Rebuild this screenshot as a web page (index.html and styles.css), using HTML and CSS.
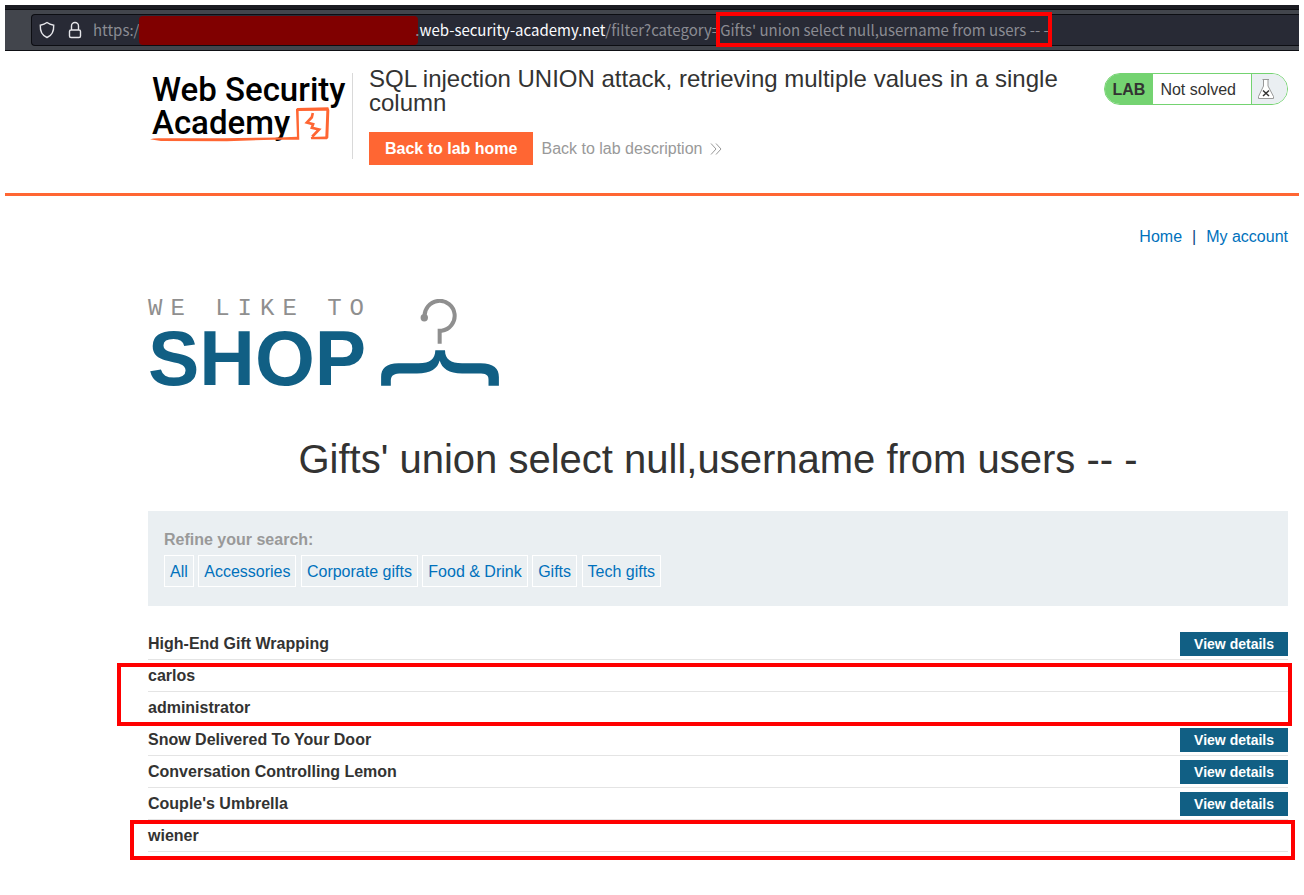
FILE: index.html
```html
<!DOCTYPE html>
<html lang="en">
<head>
<meta charset="utf-8">
<title>SQL injection UNION attack, retrieving multiple values in a single column</title>
<link rel="stylesheet" href="styles.css">
</head>
<body>
<div class="browser-bar">
  <div class="url-field">
    <svg class="url-icon" viewBox="0 0 16 18" width="16" height="18" aria-hidden="true"><path d="M8 1.5C6 3 3.500 3.800 1.300 4.200C1 10 3.300 14.500 8 16.500C12.700 14.500 15 10 14.700 4.200C12.500 3.800 10 3 8 1.500Z"/></svg>
    <svg class="url-icon" viewBox="0 0 16 18" width="16" height="18" aria-hidden="true"><path d="M4.500 9V5a3.500 3.500 0 0 1 7 0v4M2.500 10.500a1.500 1.500 0 0 1 1.500-1.500h8a1.500 1.500 0 0 1 1.500 1.500v4.500a1.500 1.500 0 0 1-1.500 1.500H4A1.500 1.500 0 0 1 2.500 15Z"/></svg>
    <div class="url-text"><span>https://</span><span class="redacted"></span><span>.</span><span class="domain">web-security-academy.net</span><span>/filter?category=</span><span class="payload">Gifts' union select null,username from users -- -</span></div>
  </div>
</div>

<header class="lab-header">
  <a class="academy-logo" href="#" aria-label="Web Security Academy">
    <span class="logo-line">Web Security</span>
    <span class="logo-line">Academy</span>
    <svg class="logo-mark" viewBox="27 140 545 106" width="182" height="35" aria-hidden="true"><path class="brush" d="M27 238Q38 234 60 235L250 235L420 232L472 230L469 147L473 143L567 141L570 150L567 233L563 238L515 238L514 231L558 229L561 151L477 152L479 239L400 239L260 244L60 243Z"/><path class="bolt" d="M520 158L517 171L502 187L521 192L517 203L539 208L518 230"/></svg>
  </a>
  <div class="lab-title">
    <h2>SQL injection UNION attack, retrieving multiple values in a single column</h2>
    <div class="lab-actions">
      <a class="lab-home" href="#">Back to lab home</a>
      <a class="lab-desc" href="#">Back to lab description <svg viewBox="0 0 12 12" width="12" height="12" aria-hidden="true"><path d="M1 0.500L6 6L1 11.500M6 0.500L11 6L6 11.500"/></svg></a>
    </div>
  </div>
  <div class="lab-status">
    <span class="status-tag">LAB</span>
    <span class="status-text">Not solved</span>
    <span class="status-flask"><svg viewBox="0 0 18 20" width="18" height="20" aria-hidden="true"><path class="flask" d="M5.500 0.500H12M6.500 0.500V7L1.500 17.500V19.500H16.500V17.500L11 7V0.500"/><path class="cross" d="M6 11.500L12 17M12 11.500L6 17"/></svg></span>
  </div>
</header>

<main class="shop">
  <nav class="top-links"><a href="#">Home</a><span>|</span><a href="#">My account</a></nav>

  <div class="shop-logo">
    <div class="shop-words">
      <span class="tagline">WE LIKE TO</span>
      <span class="shop-name">SHOP</span>
    </div>
    <svg viewBox="723 42 352 260" width="118" height="87" aria-hidden="true"><path class="hook" d="M853 96A45 45 0 1 1 904 137H898V176"/><circle class="knob" cx="852" cy="98" r="11"/><path class="hanger" d="M885 195H914C914 222 930 233 965 234H1020C1060 234 1075 250 1075 275V301H1044V283C1044 268 1035 265 1015 265H965C925 264 905 250 898 226C892 250 872 264 830 265H785C762 265 753 270 752 285V301H723V275C723 250 738 234 775 234H835C870 233 884 222 885 195Z"/></svg>
  </div>

  <h1>Gifts' union select null,username from users -- -</h1>

  <section class="filters">
    <span class="filters-label">Refine your search:</span>
    <div>
      <a class="chip" href="#">All</a>
      <a class="chip" href="#">Accessories</a>
      <a class="chip" href="#">Corporate gifts</a>
      <a class="chip" href="#">Food &amp; Drink</a>
      <a class="chip" href="#">Gifts</a>
      <a class="chip" href="#">Tech gifts</a>
    </div>
  </section>

  <div class="results">
    <table>
      <tbody>
        <tr><th scope="row">High-End Gift Wrapping</th><td><a class="details" href="#">View details</a></td></tr>
        <tr><th scope="row">carlos</th><td></td></tr>
        <tr><th scope="row">administrator</th><td></td></tr>
        <tr><th scope="row">Snow Delivered To Your Door</th><td><a class="details" href="#">View details</a></td></tr>
        <tr><th scope="row">Conversation Controlling Lemon</th><td><a class="details" href="#">View details</a></td></tr>
        <tr><th scope="row">Couple's Umbrella</th><td><a class="details" href="#">View details</a></td></tr>
        <tr><th scope="row">wiener</th><td></td></tr>
      </tbody>
    </table>
    <div class="mark mark-users"></div>
    <div class="mark mark-wiener"></div>
  </div>
</main>
</body>
</html>
```
FILE: styles.css
```css
* { box-sizing: border-box; }

body {
  margin: 0;
  padding: 5px;
  background: #fff;
  color: #333332;
  font: 16px/24px "Liberation Sans", Arial, sans-serif;
}

a { color: #0071bc; text-decoration: none; }

/* Browser address bar */
.browser-bar {
  height: 46px;
  padding: 4px 0 4px 26px;
  background: #42454c;
  border-top: 4px solid #1b1c22;
  border-bottom: 1px solid #0e0f14;
  box-shadow: inset 0 1px #0c0d12;
}

.url-field {
  display: flex;
  align-items: center;
  gap: 12px;
  height: 32px;
  margin-top: 1px;
  padding-left: 7px;
  background: #282a35;
  border: 1px solid #0c0d12;
  border-right: 0;
  border-radius: 4px 0 0 4px;
}

.url-icon { fill: none; stroke: #e6e6ea; stroke-width: 1.4; flex: none; }

.url-text {
  display: flex;
  align-items: center;
  margin-left: -2px;
  color: #8b8c93;
  font: 15px/20px "Noto Sans CJK SC", "Noto Sans", sans-serif;
  white-space: nowrap;
}

.domain { color: #fbfbfe; }

.redacted {
  width: 279px;
  height: 29px;
  margin: 0 -3px 0 -6px;
  background: #800000;
  border-radius: 4px;
}

.payload { position: relative; }

.payload::after {
  content: "";
  position: absolute;
  inset: -8px -3px -7px -4px;
  border: 4px solid #f00;
}

/* Lab banner */
.lab-header {
  display: flex;
  align-items: flex-start;
  padding: 16px 11px 28px 143px;
  border-bottom: 3px solid #ff6633;
}

.academy-logo {
  position: relative;
  flex: none;
  width: 205px;
  height: 86px;
  margin-top: 6px;
  padding-left: 4px;
  border-right: 1px solid #d9d9d9;
  color: #000;
  font: 500 33px/33px Roboto, sans-serif;
}

.logo-line { display: block; white-space: nowrap; }

.logo-mark { position: absolute; left: 1px; top: 34px; }
.brush { fill: #ff6633; }
.bolt { fill: none; stroke: #ff6633; stroke-width: 8; }

.lab-title { flex: 1; padding: 0 32px 0 16px; }

.lab-title h2 { margin: 0; font-size: 24px; line-height: 24px; font-weight: 400; }

.lab-actions { display: flex; align-items: center; gap: 8px; margin-top: 17px; }

.lab-home {
  padding: 0 16px;
  background: #ff6633;
  color: #fff;
  font-weight: 700;
  line-height: 33px;
}

.lab-desc { display: flex; align-items: center; gap: 8px; color: #999; }
.lab-desc svg { fill: none; stroke: #999; }

.lab-status {
  display: flex;
  flex: none;
  height: 32px;
  margin-top: 6px;
  overflow: hidden;
  border: 1px solid #74d371;
  border-radius: 16px;
  line-height: 32px;
}

.status-tag { padding: 0 8px; background: #74d371; font-weight: 700; }
.status-text { padding: 0 15px 0 7px; }

.status-flask {
  display: flex;
  align-items: center;
  width: 36px;
  padding-left: 5px;
  background: #eaeff2;
  border-left: 1px solid #74d371;
}

.flask { fill: #fff; stroke: #999; }
.cross { fill: none; stroke: #333332; stroke-width: 1.5; }

/* Shop page */
.shop { padding: 29px 11px 38px 143px; }

.top-links { display: flex; justify-content: flex-end; gap: 10px; color: #0b4a80; }

.shop-logo { display: flex; gap: 18px; align-items: flex-start; height: 90px; margin-top: 50px; }
.shop-words { display: flex; flex-direction: column; width: 215px; }

.tagline {
  color: #8f8f8f;
  font: 24px/20px "Liberation Mono", monospace;
  letter-spacing: 8px;
  white-space: nowrap;
}

.shop-name { color: #115f84; font-size: 77px; font-weight: 700; line-height: 78px; }

.hook { fill: none; stroke: #8f8f8f; stroke-width: 12; }
.knob { fill: #8f8f8f; }
.hanger { fill: #115f84; }

h1 { margin: 46px 0 28px; font-size: 40px; line-height: 48px; font-weight: 400; text-align: center; }

.filters { padding: 17px 16px 18px; background: #eaeff2; }
.filters-label { display: block; margin-bottom: 3px; color: #999; font-weight: 700; }

.filters div { height: 33px; }

.chip {
  display: inline-block;
  padding: 1px 5px 0;
  border: 1px solid #fff;
  line-height: 29px;
}

.results { position: relative; margin-top: 22px; }

table { width: 100%; border-collapse: separate; border-spacing: 0; }
tr { height: 32px; }
th, td { padding: 0; border-bottom: 1px solid #e4e4e4; }
th { text-align: left; }
td { text-align: right; }

.details {
  display: inline-block;
  padding: 0 14px;
  background: #115f84;
  color: #fff;
  font-size: 14px;
  font-weight: 700;
  line-height: 24px;
  vertical-align: middle;
}

/* Highlight frames drawn over the result rows */
.mark { position: absolute; border: 4px solid #f00; }
.mark-users { top: 35px; left: -31px; right: -4px; height: 63px; }
.mark-wiener { top: 192px; left: -18px; right: -7px; height: 40px; }
```
